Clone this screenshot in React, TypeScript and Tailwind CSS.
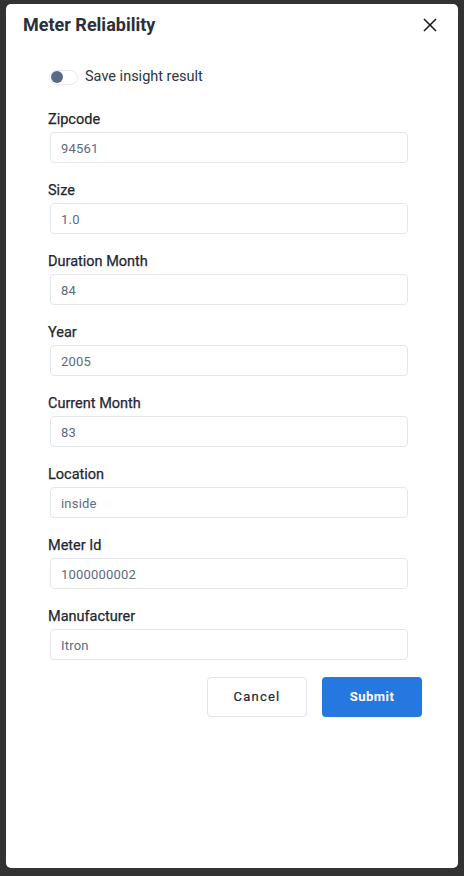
import React from "react";

const fields = [
  { label: "Zipcode", value: "94561" },
  { label: "Size", value: "1.0" },
  { label: "Duration Month", value: "84" },
  { label: "Year", value: "2005" },
  { label: "Current Month", value: "83" },
  { label: "Location", value: "inside" },
  { label: "Meter Id", value: "1000000002" },
  { label: "Manufacturer", value: "Itron" },
];

export default function App() {
  return (
    <div
      className="h-[876px] w-full bg-[#323232] px-[6px] pt-1"
      style={{ fontFamily: "Roboto, 'Noto Sans', sans-serif" }}
    >
      <div className="flex h-[864px] flex-col rounded-[5px] bg-white">
        <div className="flex h-[41px] items-center justify-between pl-[17px] pr-[21px]">
          <h2 className="text-[18px] font-bold text-[#2a2f3a]">Meter Reliability</h2>
          <button className="text-[#1b1b1b]" aria-label="Close">
            <svg width="14" height="14" viewBox="0 0 14 14" fill="none" stroke="currentColor" strokeWidth="1.6">
              <line x1="1" y1="1" x2="13" y2="13" />
              <line x1="13" y1="1" x2="1" y2="13" />
            </svg>
          </button>
        </div>

        <div className="pl-[42px] pr-[36px] pt-[21px]">
          <div className="flex h-[22px] items-center gap-[7px] pl-px">
            <div className="flex h-[15px] w-[29px] items-center rounded-full border border-[#e3e7ee] bg-white px-px">
              <div className="h-[12px] w-[12px] rounded-full bg-[#5b6b86]" />
            </div>
            <span className="text-[14.5px] leading-[22px] text-[#2d3443]">Save insight result</span>
          </div>

          <div className="mt-[21px] flex w-[360px] flex-col gap-[17px]">
            {fields.map((f) => (
              <div key={f.label}>
                <label className="block text-[14.5px] leading-[22px] text-[#1f2633] [-webkit-text-stroke:0.25px_#1f2633]">
                  {f.label}
                </label>
                <input
                  readOnly
                  value={f.value}
                  className="ml-[2px] mt-px h-[31px] w-[358px] rounded-[4px] border border-[#e2e6ec] px-[10px] pt-[2px] text-[13px] tracking-[0.2px] text-[#5a6a86] outline-none"
                />
              </div>
            ))}
          </div>

          <div className="mt-[17px] flex justify-end gap-[15px]">
            <button className="h-10 w-[100px] rounded-[4px] border border-[#dfe4f0] bg-white text-[13px] tracking-[1.2px] text-[#1f2633] [-webkit-text-stroke:0.2px_#1f2633]">
              Cancel
            </button>
            <button className="h-10 w-[100px] rounded-[4px] bg-[#2478df] text-[13px] font-bold tracking-[0.5px] text-white">
              Submit
            </button>
          </div>
        </div>
      </div>
    </div>
  );
}
